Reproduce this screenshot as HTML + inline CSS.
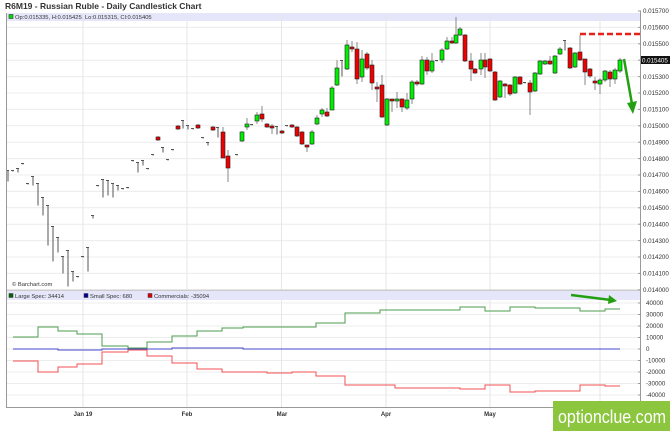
<!DOCTYPE html>
<html><head><meta charset="utf-8"><style>
body{margin:0;background:#fff;width:670px;height:431px;overflow:hidden;font-family:"Liberation Sans",sans-serif}
svg{position:absolute;left:0;top:0}
</style></head><body>
<svg id="s" width="670" height="431" xmlns="http://www.w3.org/2000/svg" font-family="Liberation Sans, sans-serif">
<text x="5" y="9" font-size="8.5" font-weight="bold" fill="#333">R6M19 - Russian Ruble - Daily Candlestick Chart</text>
<rect x="6" y="13" width="634" height="8" fill="#e6e6fa"/>
<rect x="9" y="14.5" width="4" height="4" fill="#00dd00" stroke="#333" stroke-width="0.6"/>
<text x="15" y="19" font-size="5.8" fill="#333">Op:0.015335, H:0.015425, Lo:0.015315, Cl:0.015405</text>
<g id="grid"></g>
<g id="candles"></g>
<rect x="6" y="289.5" width="634" height="1.6" fill="#ccc"/>
<rect x="6" y="291" width="634" height="9" fill="#e6e6fa"/>
<rect x="9" y="293.5" width="4" height="4" fill="#006400" stroke="#333" stroke-width="0.5"/>
<text x="15" y="298" font-size="5.8" fill="#333">Large Spec: 34414</text>
<rect x="84" y="293.5" width="4" height="4" fill="#000099" stroke="#333" stroke-width="0.5"/>
<text x="90" y="298" font-size="5.8" fill="#333">Small Spec: 680</text>
<rect x="148" y="293.5" width="4" height="4" fill="#dd0000" stroke="#333" stroke-width="0.5"/>
<text x="154" y="298" font-size="5.8" fill="#333">Commercials: -35094</text>
<text x="12" y="286" font-size="5.8" fill="#333">© Barchart.com</text>
<g id="lines" fill="none" stroke-width="1"></g>
<line x1="6.5" y1="13" x2="6.5" y2="408" stroke="#999"/>
<line x1="6" y1="407.5" x2="640" y2="407.5" stroke="#999"/>
<line x1="640.5" y1="11" x2="640.5" y2="408" stroke="#999"/>
<g id="axis" font-size="6.2" fill="#333"></g>
<text x="83" y="416" font-size="6" font-weight="bold" fill="#333" text-anchor="middle">Jan 19</text>
<text x="187" y="416" font-size="6" font-weight="bold" fill="#333" text-anchor="middle">Feb</text>
<text x="282" y="416" font-size="6" font-weight="bold" fill="#333" text-anchor="middle">Mar</text>
<text x="386" y="416" font-size="6" font-weight="bold" fill="#333" text-anchor="middle">Apr</text>
<text x="490" y="416" font-size="6" font-weight="bold" fill="#333" text-anchor="middle">May</text>
<line x1="580" y1="34" x2="640" y2="34" stroke="#e8201a" stroke-width="2.5" stroke-dasharray="6,3"/>
<line x1="624" y1="59" x2="632" y2="104" stroke="#22a012" stroke-width="2.5"/>
<polygon points="627,103 637,101 633,114" fill="#22a012"/>
<line x1="571" y1="295" x2="611" y2="300" stroke="#22a012" stroke-width="2.5"/>
<polygon points="609,295 617,301 608,304" fill="#22a012"/>
<rect x="641" y="56" width="29" height="8" fill="#111"/>
<text x="642" y="62.5" font-size="6.2" fill="#fff">0.015405</text>
<rect x="553" y="401" width="117" height="30" fill="#8cc63e"/>
<text x="558" y="423" font-size="18" fill="#fff" textLength="108" lengthAdjust="spacingAndGlyphs">optionclue.com</text>
</svg>
<script>
var NS="http://www.w3.org/2000/svg";
function el(p,t,a){var e=document.createElementNS(NS,t);for(var k in a)e.setAttribute(k,a[k]);p.appendChild(e);return e;}
var g=document.getElementById('grid'),ax=document.getElementById('axis');
for(var i=0;i<=17;i++){var y=11+i*16.4;if(y>13&&y<289)el(g,'line',{x1:6,x2:640,y1:y,y2:y,stroke:'#ececec','stroke-width':1});
el(ax,'line',{x1:638,x2:641,y1:y,y2:y,stroke:'#999'});
var v=(0.0157-i*0.0001).toFixed(6);var t=el(ax,'text',{x:643,y:y+2.2});t.textContent=v;}
for(var i=0;i<=8;i++){var y=303+i*11.5;el(g,'line',{x1:6,x2:640,y1:y,y2:y,stroke:'#ececec'});
el(ax,'line',{x1:638,x2:641,y1:y,y2:y,stroke:'#999'});var t=el(ax,'text',{x:646,y:y+2.2});t.textContent=(40000-i*10000);}
[83,187,281.5,386,490,600].forEach(function(x){el(g,'line',{x1:x,x2:x,y1:13,y2:407,stroke:'#e6e6e6'});});
var c=document.getElementById('candles');
var ticks=[[8,170,181],[13,170,171],[18,168,172],[23,163,164],[28,183,184],[33,176,185],[38,183,205],[43,197,215],[48,205,245],[53,226,261],[58,237,252],[63,256,273],[68,250,286],[73,271,281],[78,276,277],[83,256,257],[88,247,271],[93,215,218],[98,185,186],[103,179,197],[108,180,195],[113,183,197],[118,185,190],[123,188,189],[128,187,188],[133,160,161],[138,162,172],[143,160,165],[148,168,169],[153,154,155],[163,147,152],[168,159,160],[173,149,150],[183,120,128],[188,125,129],[193,128,129],[203,137,138],[208,142,145],[218,127,137],[237,154,155],[252,124,125],[277,126,134],[287,125,126],[342,60,76],[437,60,61],[525,82,83],[565,40,50]];
ticks.forEach(function(a){el(c,'line',{x1:a[0],x2:a[0],y1:a[1],y2:a[2]+0.5,stroke:'#555','stroke-width':1});el(c,'line',{x1:a[0]-2,x2:a[0]+1,y1:a[1]+0.5,y2:a[1]+0.5,stroke:'#555'});});
var cs=[[158,137,140,136,141,'r'],[178,126,129,125,130,'r'],[198,125,128,124,129,'r'],[213,127,130,126,131,'r'],[223,132,158,127,147,'r'],[228,156,168,150,182,'r'],
[242,132,141,131,142,'g'],[247,124,127,118,130,'g'],[257,115,121,112,124,'g'],[262,114,119,106,122,'r'],[267,124,127,123,128,'r'],[272,126,128,124,134,'r'],[282,131,133,130,134,'r'],[292,125,127,124,128,'r'],[297,127,136,126,137,'r'],[302,132,144,131,145,'r'],[307,145,146,145,152,'r'],[312,132,144,130,145,'g'],[317,118,124,115,125,'g'],[322,110,114,108,117,'g'],[327,112,116,108,117,'r'],[332,88,110,86,110,'g'],[337,68,85,60,86,'g'],[347,45,69,40,70,'g'],[352,47,49,41,52,'r'],[357,49,79,42,84,'r'],[362,59,77,50,82,'g'],[367,54,68,52,70,'r'],[372,65,83,60,90,'r'],[377,87,89,82,102,'r'],[382,85,117,75,118,'r'],[387,99,125,98,126,'g'],[392,99,101,99,112,'r'],[397,99,100,92,108,'g'],[402,99,107,98,112,'r'],[407,100,108,93,110,'g'],[412,82,99,80,104,'g'],[417,82,84,80,86,'r'],[422,60,84,56,85,'g'],[427,60,71,57,75,'r'],[432,61,71,53,73,'g'],[442,50,60,48,63,'g'],[447,41,49,37,50,'g'],[452,41,43,37,44,'r'],[456,35,43,17,44,'g'],[460,29,35,27,36,'g'],[465,35,61,34,62,'r'],[471,61,69,53,81,'r'],[475,69,73,68,74,'r'],[481,60,69,53,75,'g'],[485,60,67,53,78,'r'],[490,59,71,58,72,'r'],[495,72,100,71,101,'r'],[500,81,97,80,98,'g'],[505,84,86,83,98,'r'],[510,85,94,84,96,'r'],[515,77,93,76,94,'g'],[520,77,84,76,85,'r'],[530,83,92,80,115,'r'],[535,73,91,72,92,'g'],[540,61,74,60,75,'g'],[545,61,64,60,65,'g'],[550,61,64,56,65,'r'],[555,56,73,55,74,'g'],[560,49,54,47,55,'g'],[570,48,68,47,69,'r'],[575,53,67,52,68,'g'],[580,52,60,35,61,'r'],[585,59,72,59,85,'r'],[590,69,76,68,78,'r'],[595,81,83,77,90,'r'],[600,80,84,78,94,'g'],[605,71,80,70,82,'g'],[610,72,79,70,87,'r'],[615,70,79,68,84,'g'],[620,60,71,58,73,'g']];
cs.forEach(function(a){el(c,'line',{x1:a[0],x2:a[0],y1:a[3],y2:a[4],stroke:'#888'});
el(c,'rect',{x:a[0]-2,y:a[1],width:4,height:Math.max(2,a[2]-a[1]),fill:a[5]=='g'?'#00ee00':'#ee0000',stroke:'#222','stroke-width':0.6});});
var L=document.getElementById('lines');
function step(pts,col){var d='M'+pts[0][0]+' '+pts[0][1];for(var i=1;i<pts.length;i++){d+=' H'+pts[i][0]+' V'+pts[i][1];}el(L,'path',{d:d,stroke:col});}
step([[13,337],[38,327],[58,331],[77,334],[102,346],[128,348],[147,342],[172,336],[197,331],[222,328],[243,327],[316,323],[345,313],[380,310],[460,307],[485,311],[510,307],[535,308],[580,311],[605,309],[620,309]],'#4c9e4c');
step([[13,349],[58,350],[102,349],[172,348],[197,348],[243,349],[316,349],[620,349]],'#4444cc');
step([[13,361],[38,372],[58,367],[77,364],[102,352],[128,350],[147,356],[172,363],[197,369],[222,372],[267,373],[292,372],[316,376],[345,385],[395,388],[460,389],[485,385],[510,392],[535,391],[580,385],[605,386],[620,386]],'#f05050');
</script>
</body></html>
